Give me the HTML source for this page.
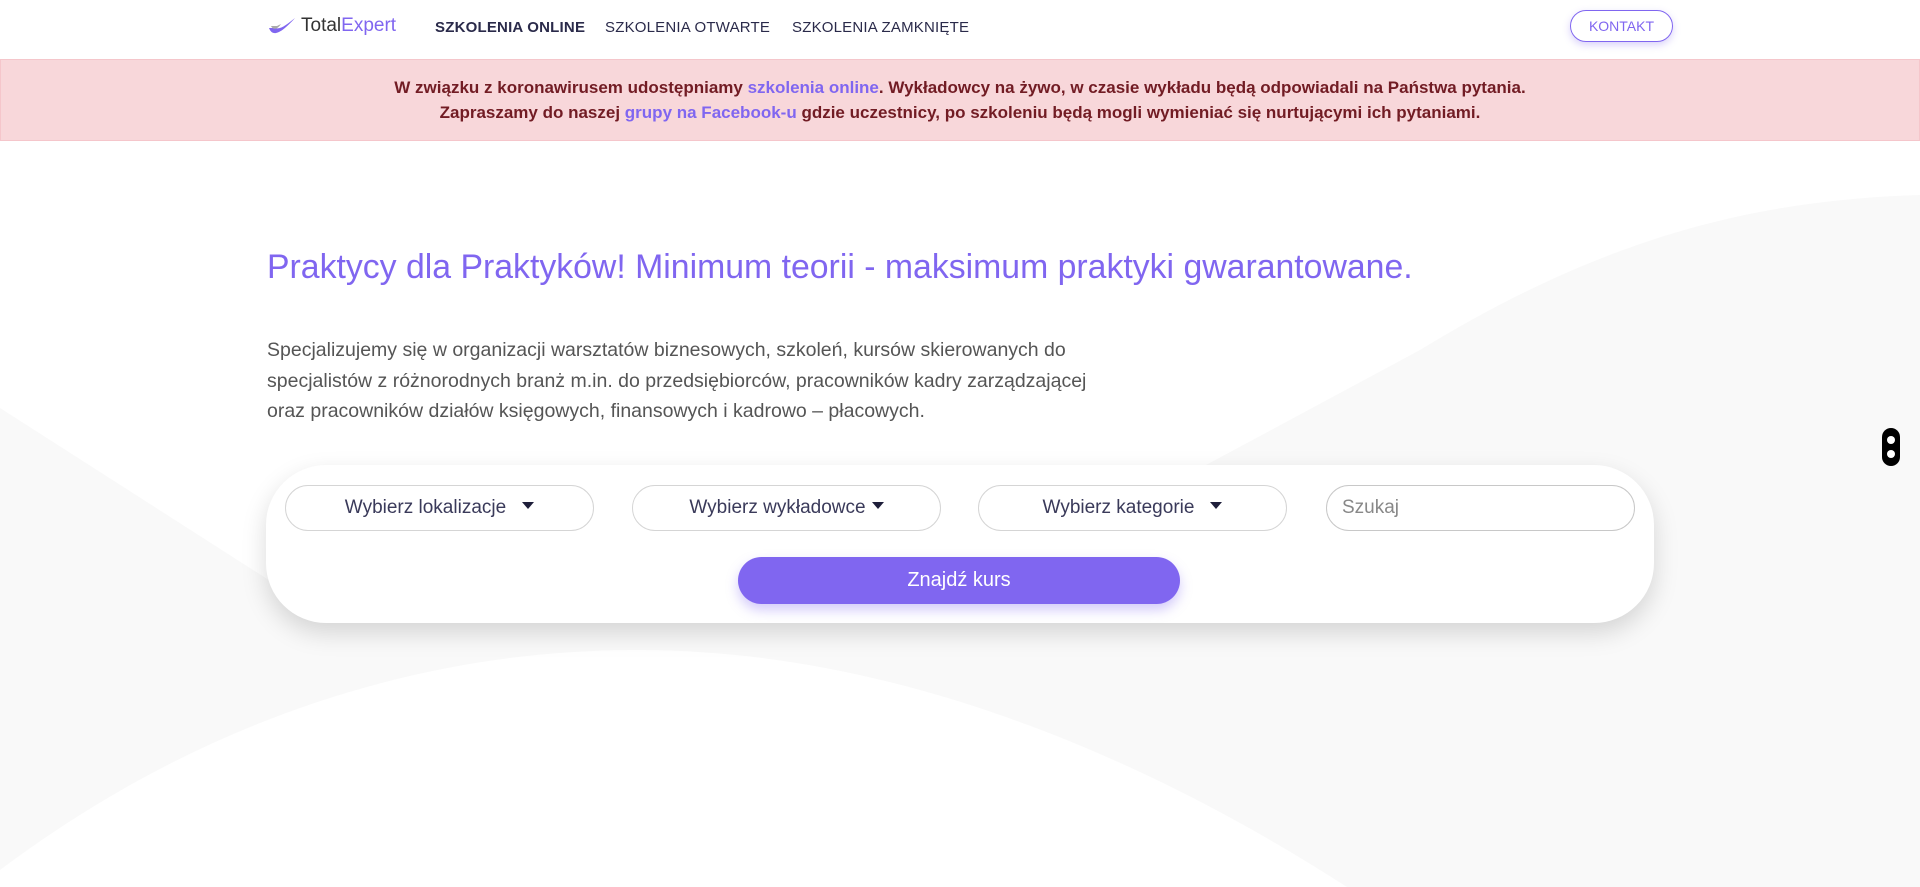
<!DOCTYPE html>
<html><head><meta charset="utf-8"><style>
*{box-sizing:border-box;margin:0;padding:0}
body{width:1920px;height:887px;overflow:hidden;background:#fff;font-family:"Liberation Sans",sans-serif;position:relative}
.nav{position:absolute;left:0;top:0;width:1920px;height:59px;background:#fff;z-index:3}
.logo{position:absolute;left:267px;top:14px;display:flex;align-items:center;font-size:19px;color:#333}
.logo span{color:#8066f0}
.nav a{position:absolute;top:19px;font-size:15px;color:#2a2a4a;text-decoration:none;letter-spacing:0.2px}
.kontakt{position:absolute;left:1570px;top:10px;width:103px;height:32px;border:1px solid #8066f0;border-radius:16px;color:#8066f0;font-size:14px;text-align:center;line-height:30px;box-shadow:0 3px 8px rgba(128,102,240,.3)}
.banner{position:absolute;left:0;top:59px;width:1920px;height:82px;background:#f8d7da;border:1px solid #f5c6cb;color:#721c24;font-weight:bold;font-size:17px;text-align:center;line-height:25px;padding-top:15px;z-index:2}
.banner b{color:#8066f0}
h1{position:absolute;left:267px;top:248px;font-weight:normal;font-size:33.8px;color:#8066f0;z-index:2;white-space:nowrap}
p.t{position:absolute;left:267px;top:335px;width:855px;font-size:19.5px;line-height:30.5px;color:#555;z-index:2}
.card{position:absolute;left:266px;top:465px;width:1388px;height:158px;background:#fff;border-radius:60px;box-shadow:0 10px 25px rgba(0,0,0,.15);z-index:2}
.sel{position:absolute;top:20px;width:309px;height:46px;border:1px solid #d5d5d5;border-radius:23px;font-size:19px;color:#3a3a5a;text-align:center;line-height:44px}
.sel i{display:inline-block;width:0;height:0;border-left:6px solid transparent;border-right:6px solid transparent;border-top:7px solid #1e1e3a;vertical-align:middle;margin-left:16px;margin-top:-4px}
.btn{position:absolute;left:472px;top:92px;width:442px;height:47px;border-radius:24px;background:#8066f0;color:#fff;font-size:20px;text-align:center;line-height:47px;box-shadow:0 6px 12px rgba(128,102,240,.35)}
.sc{position:absolute;left:1882px;top:428px;width:18px;height:38px;background:#000;border-radius:9px;z-index:3}
.sc:before,.sc:after{content:"";position:absolute;left:5px;width:8px;height:8px;border-radius:50%;background:#fff}
.sc:before{top:8px}.sc:after{top:22px}
</style></head><body>
<svg style="position:absolute;left:0;top:0;z-index:0" width="1920" height="887">
<path d="M1206 465 L1420 350 C1600 240 1750 200 1920 195 L1920 887 L0 887 L0 408 L300 600 Z" fill="#f9f9f9"/>
<path d="M0 870 C200 720 420 650 637 650 C900 650 1150 760 1347 887 L0 887 Z" fill="#fff"/>
</svg>
<div class="nav">
<div class="logo"><svg width="30" height="24" viewBox="0 0 30 24"><path d="M2 14 C5 22 12 22 28 4 C20 10 14 16 8 14 Z" fill="#8066f0"/><path d="M4 12 C6 16 10 16 14 10 L10 12 Z" fill="#aaa"/></svg><div style="margin-left:4px">Total<span>Expert</span></div></div>
<a style="left:435px;font-weight:bold">SZKOLENIA ONLINE</a>
<a style="left:605px">SZKOLENIA OTWARTE</a>
<a style="left:792px">SZKOLENIA ZAMKNIĘTE</a>
<div class="kontakt">KONTAKT</div>
</div>
<div class="banner">W związku z koronawirusem udostępniamy <b>szkolenia online</b>. Wykładowcy na żywo, w czasie wykładu będą odpowiadali na Państwa pytania.<br>Zapraszamy do naszej <b>grupy na Facebook-u</b> gdzie uczestnicy, po szkoleniu będą mogli wymieniać się nurtującymi ich pytaniami.</div>
<h1>Praktycy dla Praktyków! Minimum teorii - maksimum praktyki gwarantowane.</h1>
<p class="t">Specjalizujemy się w organizacji warsztatów biznesowych, szkoleń, kursów skierowanych do specjalistów z różnorodnych branż m.in. do przedsiębiorców, pracowników kadry zarządzającej oraz pracowników działów księgowych, finansowych i kadrowo – płacowych.</p>
<div class="card">
<div class="sel" style="left:19px">Wybierz lokalizacje<i></i></div>
<div class="sel" style="left:366px">Wybierz wykładowce<i style="margin-left:6px"></i></div>
<div class="sel" style="left:712px">Wybierz kategorie<i></i></div>
<div class="sel" style="left:1060px;text-align:left;padding-left:15px;color:#888;border-color:#c8c8c8">Szukaj</div>
<div class="btn">Znajdź kurs</div>
</div>
<div class="sc"></div>
</body></html>
